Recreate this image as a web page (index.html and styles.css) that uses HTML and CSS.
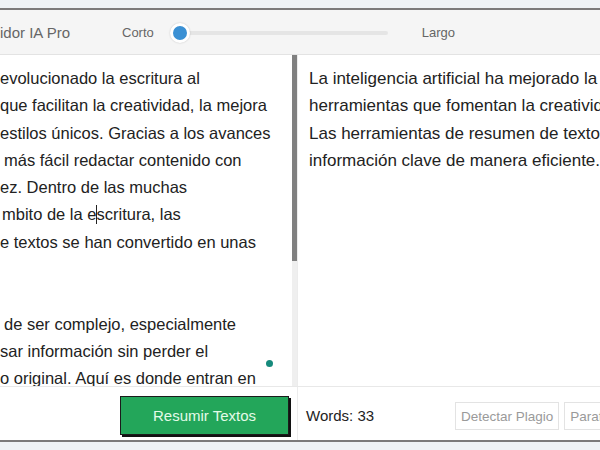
FILE: index.html
```
<!DOCTYPE html>
<html lang="es">
<head>
    <meta charset="UTF-8">
    <title>Resumidor IA Pro</title>
    <link rel="stylesheet" href="styles.css">
</head>
<body>

<div class="band"></div>
<div class="frame">
    <div class="header">
        <div class="title">idor IA Pro</div>
        <div class="lbl">Corto</div>
        <div class="slider">
            <div class="track"></div>
            <div class="thumb"></div>
        </div>
        <div class="lbl lbl_largo">Largo</div>
    </div>

    <div class="main">
        <div class="left">
            <div class="ln">evolucionado la escritura al</div>
            <div class="ln">que facilitan la creatividad, la mejora</div>
            <div class="ln">estilos únicos. Gracias a los avances</div>
            <div class="ln ind">más fácil redactar contenido con</div>
            <div class="ln">ez. Dentro de las muchas</div>
            <div class="ln ind_s">mbito de la e<span class="caret"></span>scritura, las</div>
            <div class="ln">e textos se han convertido en unas</div>
            <div class="ln">&nbsp;</div>
            <div class="ln">&nbsp;</div>
            <div class="ln ind">de ser complejo, especialmente</div>
            <div class="ln">sar información sin perder el</div>
            <div class="ln">o original. Aquí es donde entran en</div>
            <div class="dot"></div>
        </div>
        <div class="scroll">
            <div class="scroll_thumb"></div>
        </div>
        <div class="right">
            <div class="ln">La inteligencia artificial ha mejorado la escritura</div>
            <div class="ln">herramientas que fomentan la creatividad y la</div>
            <div class="ln">Las herramientas de resumen de textos permiten</div>
            <div class="ln">información clave de manera eficiente.</div>
        </div>
    </div>

    <div class="footer">
        <div class="foot_left">
            <button class="btn_main">Resumir Textos</button>
        </div>
        <div class="foot_right">
            <div class="words">Words: 33</div>
            <button class="btn_small">Detectar Plagio</button>
            <button class="btn_small">Parafrasear</button>
        </div>
    </div>
</div>
<div class="band band_bottom"></div>

</body>
</html>
```

FILE: styles.css
```
html, body {
    margin: 0;
    padding: 0;
    overflow: hidden;
}
body {
    width: 600px;
    height: 450px;
    font-family: "Liberation Sans", Arial, sans-serif;
    color: #222;
    background-color: #eef3f6;
}
.band {
    height: 8px;
    background-color: #eef3f6;
}
.frame {
    border-top: 2px solid #7b7b7b;
    border-bottom: 2px solid #7b7b7b;
    background-color: #fff;
}
.header {
    height: 44px;
    background-color: #f5f5f5;
    border-bottom: 1px solid #e3e3e3;
    display: flex;
    align-items: center;
}
.title {
    width: 122px;
    font-size: 15px;
    color: #666;
}
.lbl {
    font-size: 13px;
    color: #666;
}
.lbl_largo {
    margin-left: 34px;
}
.slider {
    position: relative;
    width: 218px;
    height: 20px;
    margin-left: 16px;
    margin-top: 2px;
}
.track {
    position: absolute;
    left: 10px;
    right: 0;
    top: 8px;
    height: 4px;
    border-radius: 2px;
    background-color: #e5e5e5;
}
.thumb {
    position: absolute;
    left: 0;
    top: 0;
    width: 14px;
    height: 14px;
    border-radius: 50%;
    background-color: #3a90d4;
    border: 3px solid #fff;
    box-shadow: 0 0 2px rgba(0, 0, 0, 0.2);
}
.main {
    display: flex;
    height: 331px;
    border-bottom: 1px solid #e8e8e8;
}
.left {
    position: relative;
    width: 292px;
    padding-top: 10px;
    overflow: hidden;
    white-space: nowrap;
}
.ln {
    font-size: 16.5px;
    line-height: 27.3px;
    height: 27.3px;
}
.right .ln {
    font-size: 17px;
}
.ind {
    padding-left: 4px;
}
.ind_s {
    padding-left: 2px;
}
.caret {
    display: inline-block;
    width: 1px;
    height: 19px;
    margin-right: -1px;
    background-color: #222;
    vertical-align: -4px;
}
.dot {
    position: absolute;
    left: 266px;
    top: 305px;
    width: 7px;
    height: 7px;
    border-radius: 50%;
    background-color: #168a7c;
}
.scroll {
    width: 5px;
    background-color: #efefef;
}
.scroll_thumb {
    height: 206px;
    background-color: #808080;
}
.right {
    flex: 1;
    border-left: 1px solid #ececec;
    padding: 10px 0 0 11px;
    overflow: hidden;
    white-space: nowrap;
}
.footer {
    display: flex;
    height: 53px;
}
.foot_left {
    width: 297px;
    display: flex;
    align-items: center;
    justify-content: flex-end;
}
.btn_main {
    width: 169px;
    height: 39px;
    margin-right: 8px;
    margin-top: 3px;
    border: 1px solid #1b1b1b;
    box-shadow: 2px 2px 0 #111;
    background-color: #23a65a;
    color: #e4fbe8;
    font-family: "Liberation Sans", Arial, sans-serif;
    font-size: 15px;
    padding: 0;
}
.foot_right {
    flex: 1;
    border-left: 1px solid #ececec;
    display: flex;
    align-items: center;
    padding-left: 8px;
    overflow: hidden;
    white-space: nowrap;
}
.words {
    width: 149px;
    flex-shrink: 0;
    margin-top: 3px;
    font-size: 15px;
    color: #222;
}
.btn_small {
    flex-shrink: 0;
    height: 28px;
    padding: 0 5px;
    margin-right: 5px;
    margin-top: 5px;
    border: 1px solid #e3e3e3;
    background-color: #fff;
    color: #9a9a9a;
    font-family: "Liberation Sans", Arial, sans-serif;
    font-size: 13.5px;
}
.band_bottom {
    height: 10px;
}
```
